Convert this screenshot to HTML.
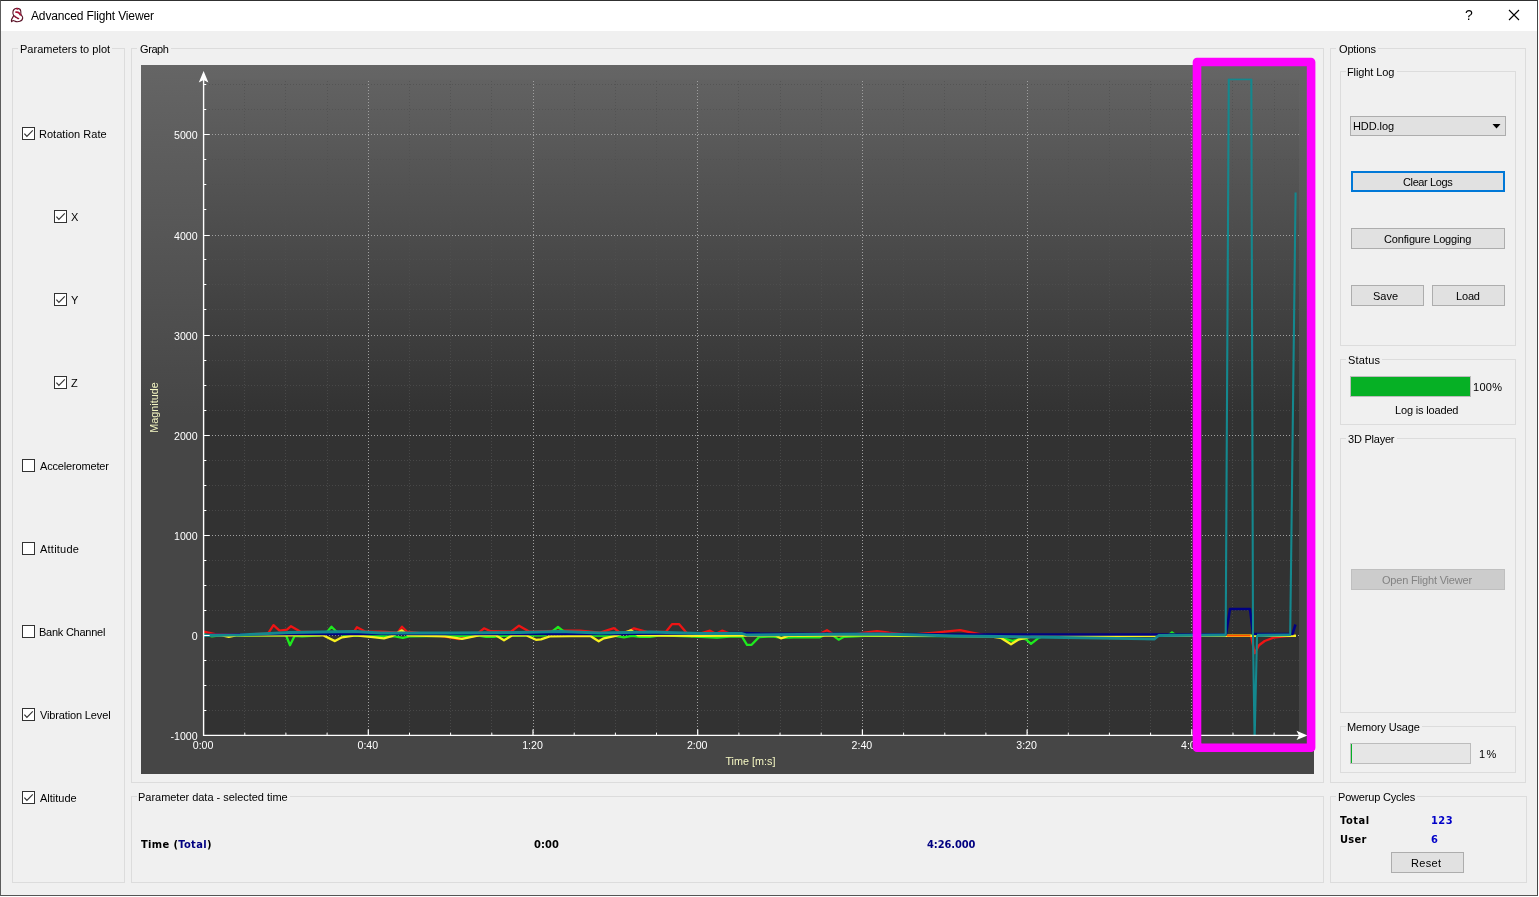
<!DOCTYPE html>
<html lang="en"><head><meta charset="utf-8"><title>Advanced Flight Viewer</title>
<style>
html,body{margin:0;padding:0;}
body{width:1539px;height:897px;overflow:hidden;background:#fff;position:relative;font-family:"Liberation Sans",sans-serif;font-size:11px;color:#000;}
.abs{position:absolute;}
#win{position:absolute;left:0;top:0;width:1536px;height:894px;border:1px solid #4a4a4a;border-color:#303030 #454545 #555 #5c5c5c;background:#f0f0f0;}
#titlebar{position:absolute;left:1px;top:1px;width:1536px;height:30px;background:#fff;}
.gb{position:absolute;border:1px solid #dcdcdc;box-sizing:border-box;}
.gt{position:absolute;background:#f0f0f0;height:12px;}
.t{position:absolute;white-space:pre;line-height:1;will-change:transform;}
.btn{position:absolute;box-sizing:border-box;background:#e1e1e1;border:1px solid #adadad;}
.cb{position:absolute;width:13px;height:13px;box-sizing:border-box;border:1px solid #333;background:#fff;}
.cb svg{position:absolute;left:-1px;top:-1px;}

</style></head><body>
<div id="win"></div><div id="titlebar"></div>
<div class="abs" style="left:1538px;top:0;width:1px;height:897px;background:#fff"></div>
<div class="gb" style="left:12px;top:48px;width:113px;height:835px"></div>
<div class="gt" style="left:18px;top:43px;width:94px"></div>
<div class="gb" style="left:131px;top:48px;width:1193px;height:735px"></div>
<div class="gt" style="left:137px;top:43px;width:34px"></div>
<div class="gb" style="left:131px;top:796px;width:1193px;height:87px"></div>
<div class="gt" style="left:137px;top:791px;width:153px"></div>
<div class="gb" style="left:1330px;top:48px;width:196px;height:735px"></div>
<div class="gt" style="left:1336px;top:43px;width:42px"></div>
<div class="gb" style="left:1340px;top:71px;width:176px;height:275px"></div>
<div class="gt" style="left:1346px;top:66px;width:51px"></div>
<div class="gb" style="left:1340px;top:359px;width:176px;height:66px"></div>
<div class="gt" style="left:1346px;top:354px;width:36px"></div>
<div class="gb" style="left:1340px;top:438px;width:176px;height:275px"></div>
<div class="gt" style="left:1346px;top:433px;width:51px"></div>
<div class="gb" style="left:1340px;top:726px;width:176px;height:47px"></div>
<div class="gt" style="left:1346px;top:721px;width:76px"></div>
<div class="gb" style="left:1330px;top:796px;width:197px;height:87px"></div>
<div class="gt" style="left:1336px;top:791px;width:81px"></div>
<svg class="abs" style="left:9px;top:6px" width="16" height="18" viewBox="9 6 16 18"><path d="M16.7 8.4 C18.6 8.3 20.4 9.2 20.7 10.8 C21 12.4 20.6 13.8 21.2 14.9 C21.8 15.8 22.8 16.4 22.7 17.9 C22.6 19.6 21.4 20.8 19.9 21.3 C18.6 21.8 17.2 21.8 16.1 21.6 C15 21.4 14.1 20.6 13.2 20.5 C12.5 20.6 12.1 21.3 11.6 21.7 C11.3 21.2 11.3 20.4 11.5 19.7 C12 18.3 13.3 16.8 13.7 15.5 C13.4 14.7 12.9 13.9 12.9 13 C12.8 10.4 14.4 8.6 16.7 8.4 Z" fill="#fff" stroke="#5a1428" stroke-width="1.1" stroke-linejoin="round"/><circle cx="17.3" cy="8.9" r="0.95" fill="#b8103a"/><path d="M16 12.2 C17 12 18.4 12.4 19.2 13.2 C19.8 13.8 20 14.4 20.3 14.8" fill="none" stroke="#a81036" stroke-width="1.7" stroke-linecap="round"/><path d="M14.5 16 C15.2 16.8 16 17.4 16.8 17.7 C17.4 18 18 18.4 18.6 18.6" fill="none" stroke="#8a1232" stroke-width="1.4" stroke-linecap="round"/></svg>
<svg class="abs" style="left:1460px;top:5px" width="70" height="22" viewBox="0 0 70 22"><g stroke="#000" stroke-width="1.1" fill="none"><path d="M49 5 L59 15 M59 5 L49 15"/></g></svg>
<div class="btn" style="left:1350px;top:116px;width:156px;height:20px"></div>
<svg class="abs" style="left:1492px;top:124px" width="9" height="5" viewBox="0 0 9 5"><path d="M0.5 0 L8.5 0 L4.5 4.5 Z" fill="#000"/></svg>
<div class="btn" style="left:1351px;top:171px;width:154px;height:21px;border:2px solid #0078d7"></div>
<div class="btn" style="left:1351px;top:228px;width:154px;height:21px"></div>
<div class="btn" style="left:1351px;top:285px;width:73px;height:21px"></div>
<div class="btn" style="left:1432px;top:285px;width:73px;height:21px"></div>
<div class="btn" style="left:1351px;top:569px;width:154px;height:21px;background:#cccccc;border-color:#bfbfbf"></div>
<div class="btn" style="left:1391px;top:852px;width:73px;height:21px"></div>
<div class="abs" style="left:1350px;top:376px;width:121px;height:21px;box-sizing:border-box;border:1px solid #bcbcbc;background:#06b025"></div>
<div class="abs" style="left:1350px;top:743px;width:121px;height:21px;box-sizing:border-box;border:1px solid #bcbcbc;background:#e6e6e6"><div style="width:1px;height:19px;background:#06b025"></div></div>
<div class="cb" style="left:22px;top:127px"><svg width="13" height="13" viewBox="0 0 13 13"><path d="M2.4 6.6 L4.9 9.4 L10.8 3.4" fill="none" stroke="#333" stroke-width="1.15"/></svg></div>
<div class="cb" style="left:54px;top:210px"><svg width="13" height="13" viewBox="0 0 13 13"><path d="M2.4 6.6 L4.9 9.4 L10.8 3.4" fill="none" stroke="#333" stroke-width="1.15"/></svg></div>
<div class="cb" style="left:54px;top:293px"><svg width="13" height="13" viewBox="0 0 13 13"><path d="M2.4 6.6 L4.9 9.4 L10.8 3.4" fill="none" stroke="#333" stroke-width="1.15"/></svg></div>
<div class="cb" style="left:54px;top:376px"><svg width="13" height="13" viewBox="0 0 13 13"><path d="M2.4 6.6 L4.9 9.4 L10.8 3.4" fill="none" stroke="#333" stroke-width="1.15"/></svg></div>
<div class="cb" style="left:22px;top:459px"></div>
<div class="cb" style="left:22px;top:542px"></div>
<div class="cb" style="left:22px;top:625px"></div>
<div class="cb" style="left:22px;top:708px"><svg width="13" height="13" viewBox="0 0 13 13"><path d="M2.4 6.6 L4.9 9.4 L10.8 3.4" fill="none" stroke="#333" stroke-width="1.15"/></svg></div>
<div class="cb" style="left:22px;top:791px"><svg width="13" height="13" viewBox="0 0 13 13"><path d="M2.4 6.6 L4.9 9.4 L10.8 3.4" fill="none" stroke="#333" stroke-width="1.15"/></svg></div>
<span class="t" style="left:1465px;top:8px;font-size:14px;font-family:'Liberation Sans', sans-serif">?</span>
<svg class="abs" style="left:0;top:0;will-change:transform" width="1539" height="897" viewBox="0 0 1539 897" font-family="'Liberation Sans', sans-serif" font-size="10.6">
<defs><linearGradient id="g1" gradientUnits="userSpaceOnUse" x1="0" y1="65" x2="0" y2="415"><stop offset="0" stop-color="#656565"/><stop offset="1" stop-color="#464646"/></linearGradient><linearGradient id="g2" gradientUnits="userSpaceOnUse" x1="0" y1="65" x2="0" y2="415"><stop offset="0" stop-color="#646464"/><stop offset="1" stop-color="#323232"/></linearGradient><clipPath id="cp"><rect x="203.6" y="78.5" width="1095.4" height="656.9"/></clipPath></defs>
<rect x="141" y="65" width="1173" height="709" fill="url(#g1)"/>
<rect x="203.6" y="79.5" width="1095.4" height="655.9" fill="url(#g2)"/>
<path d="M244.5 736 V80 M285.5 736 V80 M327.5 736 V80 M409.5 736 V80 M450.5 736 V80 M491.5 736 V80 M574.5 736 V80 M615.5 736 V80 M656.5 736 V80 M738.5 736 V80 M780.5 736 V80 M821.5 736 V80 M903.5 736 V80 M944.5 736 V80 M985.5 736 V80 M1068.5 736 V80 M1109.5 736 V80 M1150.5 736 V80 M1232.5 736 V80 M1274.5 736 V80 M203 710.5 H1299 M203 685.5 H1299 M203 660.5 H1299 M203 610.5 H1299 M203 585.5 H1299 M203 560.5 H1299 M203 510.5 H1299 M203 485.5 H1299 M203 460.5 H1299 M203 410.5 H1299 M203 385.5 H1299 M203 360.5 H1299 M203 309.5 H1299 M203 284.5 H1299 M203 259.5 H1299 M203 209.5 H1299 M203 184.5 H1299 M203 159.5 H1299 M203 109.5 H1299 M203 84.5 H1299" stroke="#505050" stroke-opacity="0.75" stroke-width="1" stroke-dasharray="1 2" fill="none" shape-rendering="crispEdges"/>
<path d="M368.5 736 V80 M533.5 736 V80 M697.5 736 V80 M862.5 736 V80 M1027.5 736 V80 M1191.5 736 V80 M203 635.5 H1299 M203 535.5 H1299 M203 435.5 H1299 M203 335.5 H1299 M203 235.5 H1299 M203 134.5 H1299" stroke="#a0a0a0" stroke-width="1" stroke-dasharray="1 2" fill="none" shape-rendering="crispEdges"/>
<g clip-path="url(#cp)">
<path d="M204.0 631.7 L215.0 634.2 L240.0 634.7 L268.0 633.7 L273.5 625.2 L279.5 630.7 L287.0 629.7 L291.0 626.2 L300.5 631.7 L330.0 632.7 L354.0 631.7 L357.0 627.2 L365.6 631.7 L381.0 631.7 L397.7 632.7 L402.0 626.7 L407.0 631.7 L425.0 633.7 L445.0 636.7 L459.0 639.2 L475.0 635.7 L484.0 628.3 L490.6 631.2 L511.0 631.7 L519.0 625.7 L529.5 631.7 L563.0 630.7 L580.0 630.7 L600.0 632.7 L614.0 628.2 L620.0 632.7 L628.0 631.7 L634.0 628.3 L647.7 632.2 L666.0 631.7 L672.0 624.1 L679.0 624.1 L686.5 632.7 L691.6 636.7 L700.0 633.7 L710.0 630.7 L716.0 633.7 L722.0 630.7 L730.0 633.7 L760.0 635.7 L780.0 634.7 L820.0 633.7 L827.0 630.2 L834.0 634.7 L850.0 635.7 L864.0 632.7 L877.0 631.2 L889.0 632.7 L910.0 634.7 L935.0 632.7 L955.0 630.7 L960.0 630.2 L972.0 632.7 L985.0 635.2 L1100.0 635.7 L1225.0 635.2 L1250.0 635.2 L1251.0 635.7 L1254.7 653.2 L1259.0 645.2 L1264.7 641.0 L1273.6 637.7 L1287.0 636.2 L1296.0 635.7" stroke="#f01414" stroke-width="2.3" fill="none" stroke-linejoin="round" />
<path d="M204.0 634.3 L212.0 636.3 L220.0 635.3 L286.0 635.3 L290.0 645.3 L294.7 635.8 L302.0 636.3 L320.0 635.3 L326.8 632.3 L331.5 626.7 L337.0 632.3 L345.0 635.3 L357.0 635.8 L395.0 636.3 L402.8 637.8 L409.5 636.3 L445.0 635.8 L480.0 635.8 L486.0 636.8 L494.0 636.8 L500.0 635.8 L545.0 635.3 L551.0 632.3 L558.0 627.0 L565.0 632.3 L572.0 635.3 L615.0 635.8 L624.0 637.3 L632.0 635.8 L640.0 636.8 L650.0 636.8 L660.0 635.3 L695.0 636.6 L717.0 637.5 L730.0 636.6 L742.0 636.6 L747.0 644.8 L751.6 644.8 L759.0 637.1 L772.7 636.3 L781.0 637.9 L800.0 637.1 L820.0 637.3 L826.8 633.8 L833.5 635.9 L838.6 639.7 L843.6 636.9 L870.0 635.7 L1000.7 636.3 L1003.0 638.3 L1012.5 640.8 L1022.7 638.3 L1026.0 639.3 L1031.0 643.8 L1038.0 638.3 L1044.0 635.8 L1168.0 635.5 L1172.0 632.3 L1176.0 635.5 L1250.0 635.3 L1257.0 635.8 L1296.0 635.8" stroke="#1eea1e" stroke-width="2.3" fill="none" stroke-linejoin="round" />
<path d="M204.0 634.8 L222.0 635.3 L228.8 636.8 L236.0 635.3 L323.0 635.3 L335.0 641.1 L342.0 637.3 L355.5 635.3 L370.7 636.8 L384.0 638.3 L392.6 635.8 L402.0 630.3 L408.0 635.3 L445.0 636.3 L462.0 638.8 L479.0 635.3 L495.7 635.3 L504.0 640.3 L512.5 635.3 L526.0 635.3 L536.0 639.8 L541.0 639.3 L549.7 636.3 L590.0 635.8 L598.7 641.3 L603.8 638.3 L615.6 635.8 L631.0 630.3 L638.0 635.3 L700.0 635.8 L775.0 635.3 L781.0 638.3 L788.0 635.8 L860.0 635.3 L945.0 635.8 L990.0 636.3 L1000.7 637.8 L1011.0 644.3 L1019.0 639.3 L1024.0 638.3 L1032.0 636.3 L1100.0 635.8 L1296.0 635.8" stroke="#f8f020" stroke-width="2.3" fill="none" stroke-linejoin="round" />
<path d="M204.0 635.0 L240.0 634.5 L290.0 634.0 L400.0 634.0 L500.0 634.0 L620.0 634.0 L742.0 633.0 L760.0 633.5 L900.0 634.0 L955.0 634.5 L1190.0 634.5 L1226.0 634.5 L1230.0 609.0 L1250.0 609.0 L1253.0 634.0 L1292.5 634.0 L1295.5 624.5" stroke="#000082" stroke-width="2.5" fill="none" stroke-linejoin="round" />
<path d="M204.0 635.5 L240.0 634.8 L289.6 632.5 L353.8 631.5 L381.0 633.0 L450.0 633.0 L520.0 632.5 L560.0 631.5 L600.0 633.0 L650.0 632.0 L700.0 633.5 L742.0 633.5 L747.0 635.0 L800.0 634.5 L880.0 634.0 L920.0 635.0 L955.0 636.0 L1000.0 636.5 L1154.5 639.0 L1158.7 635.5 L1225.7 635.0" stroke="#14888e" stroke-width="2.8" fill="none" stroke-linejoin="round" />
<path d="M1227.0 635.4 L1250.5 635.4" stroke="#ff4a00" stroke-width="2" fill="none" stroke-linejoin="round" />
<path d="M1257.0 635.0 L1290.2 634.8" stroke="#14888e" stroke-width="2.6" fill="none" stroke-linejoin="round" />
<path d="M1225.7 635.0 L1228.8 79.3 L1251.3 79.3 L1253.0 635.0 L1254.6 740.0 L1257.0 636.0 L1290.2 635.0 L1295.6 192.5" stroke="#14888e" stroke-width="2.1" fill="none" stroke-linejoin="round" stroke-linejoin="miter"/>
</g>
<path d="M203.6 75.5 V735.4 H1302.0" stroke="#fff" stroke-width="1.4" fill="none"/>
<path d="M203.6 635.5 h6 M203.6 535.5 h6 M203.6 435.5 h6 M203.6 335.5 h6 M203.6 235.5 h6 M203.6 134.5 h6 M368.3 735.4 v-6 M533.0 735.4 v-6 M697.7 735.4 v-6 M862.4 735.4 v-6 M1027.1 735.4 v-6 M1191.8 735.4 v-6" stroke="#fff" stroke-width="1.2" fill="none"/>
<path d="M203.6 710.5 h2.7 M203.6 685.5 h2.7 M203.6 660.5 h2.7 M203.6 610.5 h2.7 M203.6 585.5 h2.7 M203.6 560.5 h2.7 M203.6 510.5 h2.7 M203.6 485.5 h2.7 M203.6 460.5 h2.7 M203.6 410.5 h2.7 M203.6 385.5 h2.7 M203.6 360.5 h2.7 M203.6 309.5 h2.7 M203.6 284.5 h2.7 M203.6 259.5 h2.7 M203.6 209.5 h2.7 M203.6 184.5 h2.7 M203.6 159.5 h2.7 M203.6 109.5 h2.7 M203.6 84.5 h2.7 M244.8 735.4 v-2.7 M285.9 735.4 v-2.7 M327.1 735.4 v-2.7 M409.5 735.4 v-2.7 M450.6 735.4 v-2.7 M491.8 735.4 v-2.7 M574.2 735.4 v-2.7 M615.4 735.4 v-2.7 M656.5 735.4 v-2.7 M738.9 735.4 v-2.7 M780.0 735.4 v-2.7 M821.2 735.4 v-2.7 M903.6 735.4 v-2.7 M944.8 735.4 v-2.7 M985.9 735.4 v-2.7 M1068.3 735.4 v-2.7 M1109.4 735.4 v-2.7 M1150.6 735.4 v-2.7 M1233.0 735.4 v-2.7 M1274.1 735.4 v-2.7" stroke="#fff" stroke-width="1" fill="none"/>
<path d="M203.6 71 L208.4 82.5 L203.6 80 L198.8 82.5 Z" fill="#fff"/>
<path d="M1307.5 735.4 L1296.5 730.8 L1299 735.4 L1296.5 740.0 Z" fill="#fff"/>
<g fill="#fff">
<text x="197.6" y="740.0" text-anchor="end">-1000</text>
<text x="197.6" y="640.0" text-anchor="end">0</text>
<text x="197.6" y="540.0" text-anchor="end">1000</text>
<text x="197.6" y="440.0" text-anchor="end">2000</text>
<text x="197.6" y="340.0" text-anchor="end">3000</text>
<text x="197.6" y="240.0" text-anchor="end">4000</text>
<text x="197.6" y="139.0" text-anchor="end">5000</text>
<text x="203.1" y="748.8" text-anchor="middle">0:00</text>
<text x="367.8" y="748.8" text-anchor="middle">0:40</text>
<text x="532.5" y="748.8" text-anchor="middle">1:20</text>
<text x="697.2" y="748.8" text-anchor="middle">2:00</text>
<text x="861.9" y="748.8" text-anchor="middle">2:40</text>
<text x="1026.6" y="748.8" text-anchor="middle">3:20</text>
<text x="1191.3" y="748.8" text-anchor="middle">4:00</text>
</g>
<text x="750.4" y="764.8" text-anchor="middle" fill="#f4f6c2" font-size="10.8">Time [m:s]</text>
<text transform="translate(158.2 407.5) rotate(-90)" text-anchor="middle" fill="#f4f6c2" font-size="10.8">Magnitude</text>
<rect x="1197" y="62" width="114.1" height="685.8" fill="none" stroke="#ff00ff" stroke-width="8.6" stroke-linejoin="round"/>
</svg>
<span class="t" id="t0" style="left:30.96px;top:10.00px;font-size:12px;font-weight:400;color:#000;font-family:'Liberation Sans', sans-serif;letter-spacing:-0.137px">Advanced Flight Viewer</span>
<span class="t" id="t1" style="left:19.60px;top:44.00px;font-size:11px;font-weight:400;color:#000;font-family:'Liberation Sans', sans-serif;letter-spacing:0.011px">Parameters to plot</span>
<span class="t" id="t2" style="left:139.98px;top:44.00px;font-size:11px;font-weight:400;color:#000;font-family:'Liberation Sans', sans-serif;letter-spacing:-0.405px">Graph</span>
<span class="t" id="t3" style="left:1338.52px;top:44.00px;font-size:11px;font-weight:400;color:#000;font-family:'Liberation Sans', sans-serif;letter-spacing:-0.150px">Options</span>
<span class="t" id="t4" style="left:1347.14px;top:67.00px;font-size:11px;font-weight:400;color:#000;font-family:'Liberation Sans', sans-serif;letter-spacing:-0.100px">Flight Log</span>
<span class="t" id="t5" style="left:1352.60px;top:121.00px;font-size:11px;font-weight:400;color:#000;font-family:'Liberation Sans', sans-serif;letter-spacing:-0.090px">HDD.log</span>
<span class="t" id="t6" style="left:1402.96px;top:177.00px;font-size:11px;font-weight:400;color:#000;font-family:'Liberation Sans', sans-serif;letter-spacing:-0.380px">Clear Logs</span>
<span class="t" id="t7" style="left:1383.96px;top:234.00px;font-size:11px;font-weight:400;color:#000;font-family:'Liberation Sans', sans-serif;letter-spacing:-0.157px">Configure Logging</span>
<span class="t" id="t8" style="left:1373.14px;top:291.00px;font-size:11px;font-weight:400;color:#000;font-family:'Liberation Sans', sans-serif;letter-spacing:0.000px">Save</span>
<span class="t" id="t9" style="left:1455.62px;top:291.00px;font-size:11px;font-weight:400;color:#000;font-family:'Liberation Sans', sans-serif;letter-spacing:-0.180px">Load</span>
<span class="t" id="t10" style="left:1347.60px;top:355.00px;font-size:11px;font-weight:400;color:#000;font-family:'Liberation Sans', sans-serif;letter-spacing:0.180px">Status</span>
<span class="t" id="t11" style="left:1472.62px;top:382.00px;font-size:11px;font-weight:400;color:#000;font-family:'Liberation Sans', sans-serif;letter-spacing:0.300px">100%</span>
<span class="t" id="t12" style="left:1395.16px;top:405.00px;font-size:11px;font-weight:400;color:#000;font-family:'Liberation Sans', sans-serif;letter-spacing:-0.165px">Log is loaded</span>
<span class="t" id="t13" style="left:1348.10px;top:434.00px;font-size:11px;font-weight:400;color:#000;font-family:'Liberation Sans', sans-serif;letter-spacing:-0.225px">3D Player</span>
<span class="t" id="t14" style="left:1382.48px;top:575.00px;font-size:11px;font-weight:400;color:#838383;font-family:'Liberation Sans', sans-serif;letter-spacing:-0.191px">Open Flight Viewer</span>
<span class="t" id="t15" style="left:1347.10px;top:722.00px;font-size:11px;font-weight:400;color:#000;font-family:'Liberation Sans', sans-serif;letter-spacing:-0.164px">Memory Usage</span>
<span class="t" id="t16" style="left:1479.10px;top:749.00px;font-size:11px;font-weight:400;color:#000;font-family:'Liberation Sans', sans-serif;letter-spacing:1.300px">1%</span>
<span class="t" id="t17" style="left:1337.58px;top:792.00px;font-size:11px;font-weight:400;color:#000;font-family:'Liberation Sans', sans-serif;letter-spacing:-0.180px">Powerup Cycles</span>
<span class="t" id="t18" style="left:1340.48px;top:815.00px;font-size:11px;font-weight:700;color:#000;font-family:'DejaVu Sans Condensed', 'Liberation Sans', sans-serif;letter-spacing:0.585px">Total</span>
<span class="t" id="t19" style="left:1431.08px;top:815.00px;font-size:11px;font-weight:700;color:#0000c8;font-family:'DejaVu Sans Condensed', 'Liberation Sans', sans-serif;letter-spacing:0.450px">123</span>
<span class="t" id="t20" style="left:1339.58px;top:834.00px;font-size:11px;font-weight:700;color:#000;font-family:'DejaVu Sans Condensed', 'Liberation Sans', sans-serif;letter-spacing:0.300px">User</span>
<span class="t" id="t21" style="left:1431.08px;top:834.00px;font-size:11px;font-weight:700;color:#0000c8;font-family:'DejaVu Sans Condensed', 'Liberation Sans', sans-serif;letter-spacing:0.000px">6</span>
<span class="t" id="t22" style="left:1411.14px;top:858.00px;font-size:11px;font-weight:400;color:#000;font-family:'Liberation Sans', sans-serif;letter-spacing:0.315px">Reset</span>
<span class="t" id="t23" style="left:138.10px;top:792.00px;font-size:11px;font-weight:400;color:#000;font-family:'Liberation Sans', sans-serif;letter-spacing:-0.025px">Parameter data - selected time</span>
<span class="t" id="t24" style="left:141.00px;top:839.00px;font-size:11px;font-weight:700;color:#000;font-family:'DejaVu Sans Condensed', 'Liberation Sans', sans-serif;letter-spacing:0.360px">Time (<span style="color:#000080">Total</span>)</span>
<span class="t" id="t25" style="left:533.52px;top:839.00px;font-size:11px;font-weight:700;color:#000;font-family:'DejaVu Sans Condensed', 'Liberation Sans', sans-serif;letter-spacing:0.060px">0:00</span>
<span class="t" id="t26" style="left:927.00px;top:839.00px;font-size:11px;font-weight:700;color:#000080;font-family:'DejaVu Sans Condensed', 'Liberation Sans', sans-serif;letter-spacing:-0.077px">4:26.000</span>
<span class="t" id="t27" style="left:39.10px;top:129.00px;font-size:11px;font-weight:400;color:#000;font-family:'Liberation Sans', sans-serif;letter-spacing:0.030px">Rotation Rate</span>
<span class="t" id="t28" style="left:71.48px;top:212.00px;font-size:11px;font-weight:400;color:#000;font-family:'Liberation Sans', sans-serif;letter-spacing:0.000px">X</span>
<span class="t" id="t29" style="left:71.48px;top:295.00px;font-size:11px;font-weight:400;color:#000;font-family:'Liberation Sans', sans-serif;letter-spacing:0.000px">Y</span>
<span class="t" id="t30" style="left:71.48px;top:378.00px;font-size:11px;font-weight:400;color:#000;font-family:'Liberation Sans', sans-serif;letter-spacing:0.000px">Z</span>
<span class="t" id="t31" style="left:40.00px;top:461.00px;font-size:11px;font-weight:400;color:#000;font-family:'Liberation Sans', sans-serif;letter-spacing:-0.165px">Accelerometer</span>
<span class="t" id="t32" style="left:40.00px;top:544.00px;font-size:11px;font-weight:400;color:#000;font-family:'Liberation Sans', sans-serif;letter-spacing:0.231px">Attitude</span>
<span class="t" id="t33" style="left:39.10px;top:627.00px;font-size:11px;font-weight:400;color:#000;font-family:'Liberation Sans', sans-serif;letter-spacing:-0.245px">Bank Channel</span>
<span class="t" id="t34" style="left:40.00px;top:710.00px;font-size:11px;font-weight:400;color:#000;font-family:'Liberation Sans', sans-serif;letter-spacing:-0.141px">Vibration Level</span>
<span class="t" id="t35" style="left:40.00px;top:793.00px;font-size:11px;font-weight:400;color:#000;font-family:'Liberation Sans', sans-serif;letter-spacing:0.000px">Altitude</span>
</body></html>
